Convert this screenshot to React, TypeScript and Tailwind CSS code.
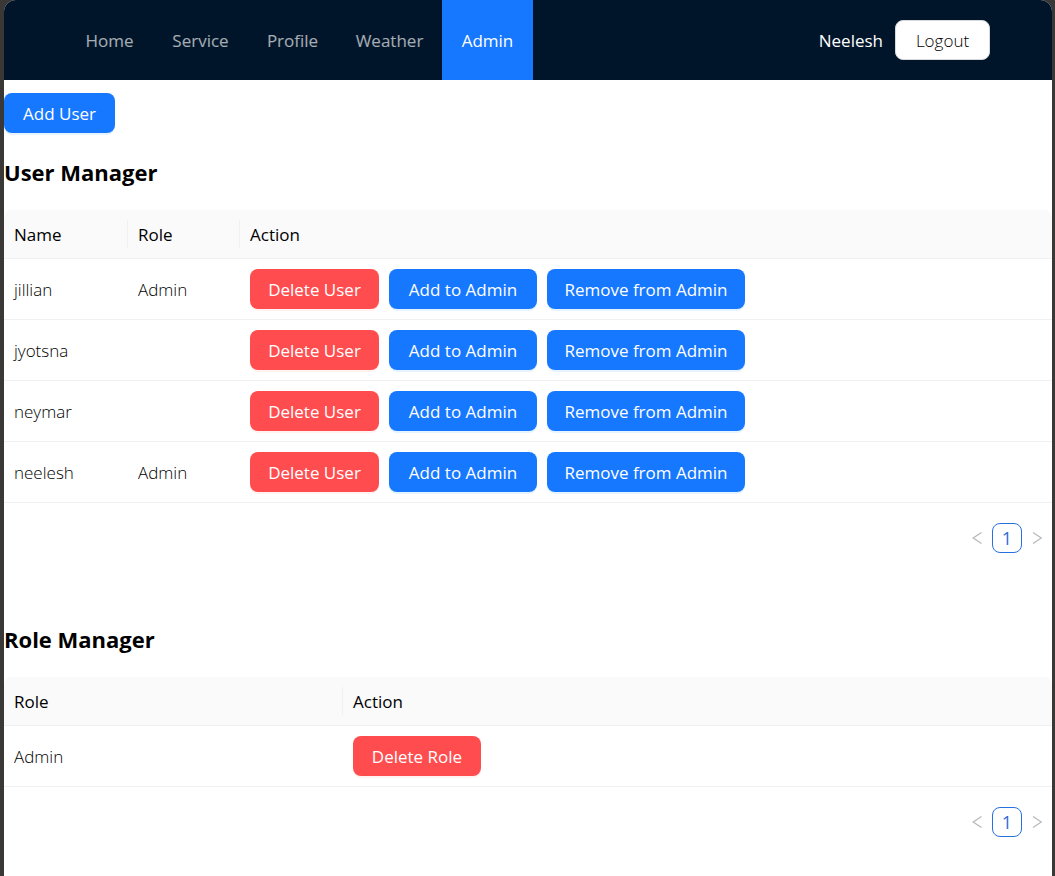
import type { ReactNode } from "react";

type Tone = "primary" | "danger" | "plain";

const tones: Record<Tone, string> = {
  primary: "bg-[#1677ff] text-white shadow-[0_2px_0_rgba(5,145,255,0.1)]",
  danger: "bg-[#ff4d4f] text-white shadow-[0_2px_0_rgba(255,38,5,0.06)]",
  plain: "bg-white font-light text-black border border-[#d9d9d9]",
};

function Button({ tone, width, children }: { tone: Tone; width: string; children: ReactNode }) {
  return (
    <button
      type="button"
      className={`h-10 shrink-0 whitespace-nowrap rounded-lg pt-0.5 text-center ${tones[tone]} ${width}`}
    >
      {children}
    </button>
  );
}

function HeaderCell({ children, divided, width = "" }: { children: ReactNode; divided?: boolean; width?: string }) {
  return (
    <th scope="col" className={`border-b border-[#f0f0f0] py-2.5 pl-2.5 text-left font-medium text-black ${width}`}>
      <div className={`flex h-7 items-center pt-0.5 ${divided ? "border-r border-[#f0f0f0]" : ""}`}>{children}</div>
    </th>
  );
}

function TextCell({ children }: { children?: ReactNode }) {
  return <td className="border-b border-[#f0f0f0] px-2.5 pt-3 pb-2.5 font-light text-black">{children}</td>;
}

function ActionCell({ children }: { children: ReactNode }) {
  return (
    <td className="border-b border-[#f0f0f0] p-2.5">
      <div className="flex gap-2.5">{children}</div>
    </td>
  );
}

function Chevron({ d }: { d: string }) {
  return (
    <svg viewBox="0 0 10 14" className="h-3.5 w-2.5" fill="none" stroke="#b8b8b8" strokeWidth="1.3" aria-hidden="true">
      <path d={d} />
    </svg>
  );
}

function Pagination() {
  return (
    <nav aria-label="Pagination" className="flex h-[30px] items-center justify-end">
      <button type="button" aria-label="Previous page" disabled className="flex h-[30px] w-[30px] items-center justify-center">
        <Chevron d="M9.5 1.5 1.2 7 9.5 12.5" />
      </button>
      <button
        type="button"
        aria-current="page"
        className="h-[30px] w-[30px] rounded-lg border border-[#2670e0] text-[18px] leading-7 text-[#2f6bd8]"
      >
        1
      </button>
      <button type="button" aria-label="Next page" disabled className="flex h-[30px] w-[30px] items-center justify-center">
        <Chevron d="M1 1.5 9.3 7 1 12.5" />
      </button>
    </nav>
  );
}

const links = [
  { label: "Home", width: "w-[87px]" },
  { label: "Service", width: "w-[95px]" },
  { label: "Profile", width: "w-[89px]" },
  { label: "Weather", width: "w-[105px]" },
  { label: "Admin", width: "w-[91px]" },
];

const users = [
  { name: "jillian", role: "Admin" },
  { name: "jyotsna", role: "" },
  { name: "neymar", role: "" },
  { name: "neelesh", role: "Admin" },
];

export default function App() {
  return (
    <div className="min-h-screen bg-[#3a3836] pr-[3px] pl-1 font-['Open_Sans','Noto_Sans',sans-serif] text-[17px] leading-7 text-black/88">
      <div className="min-h-screen rounded-t-xl bg-white">
        <header className="flex h-20 items-center justify-between rounded-t-xl bg-[#001529] pr-[62px] pl-[62px]">
          <nav className="flex h-full">
            {links.map(({ label, width }) => (
              <a
                key={label}
                href="#"
                className={`flex h-full items-center justify-center pt-0.5 ${width} ${
                  label === "Admin" ? "bg-[#1677ff] text-white" : "text-white/65"
                }`}
              >
                {label}
              </a>
            ))}
          </nav>
          <div className="flex items-center gap-3 text-white">
            <span className="pt-0.5">Neelesh</span>
            <Button tone="plain" width="w-[95px]">Logout</Button>
          </div>
        </header>

        <main className="pt-[13px]">
          <Button tone="primary" width="w-[111px]">Add User</Button>

          <h2 className="mt-[23px] text-[22px] leading-8 font-bold text-black">User Manager</h2>
          <table className="mt-[22px] w-full table-fixed border-separate border-spacing-0">
            <thead className="bg-[#fafafa]">
              <tr>
                <HeaderCell divided width="w-[124px] rounded-tl-lg">Name</HeaderCell>
                <HeaderCell divided width="w-28">Role</HeaderCell>
                <HeaderCell width="rounded-tr-lg">Action</HeaderCell>
              </tr>
            </thead>
            <tbody className="font-normal">
              {users.map((user) => (
                <tr key={user.name}>
                  <TextCell>{user.name}</TextCell>
                  <TextCell>{user.role}</TextCell>
                  <ActionCell>
                    <Button tone="danger" width="w-[129px]">Delete User</Button>
                    <Button tone="primary" width="w-[148px]">Add to Admin</Button>
                    <Button tone="primary" width="w-[198px]">Remove from Admin</Button>
                  </ActionCell>
                </tr>
              ))}
            </tbody>
          </table>
          <div className="mt-5">
            <Pagination />
          </div>

          <h2 className="mt-[70px] text-[22px] leading-8 font-bold text-black">Role Manager</h2>
          <table className="mt-[22px] w-full table-fixed border-separate border-spacing-0">
            <thead className="bg-[#fafafa]">
              <tr>
                <HeaderCell divided width="w-[339px] rounded-tl-lg">Role</HeaderCell>
                <HeaderCell width="rounded-tr-lg">Action</HeaderCell>
              </tr>
            </thead>
            <tbody>
              <tr>
                <TextCell>Admin</TextCell>
                <ActionCell>
                  <Button tone="danger" width="w-32">Delete Role</Button>
                </ActionCell>
              </tr>
            </tbody>
          </table>
          <div className="mt-5">
            <Pagination />
          </div>
        </main>
      </div>
    </div>
  );
}
